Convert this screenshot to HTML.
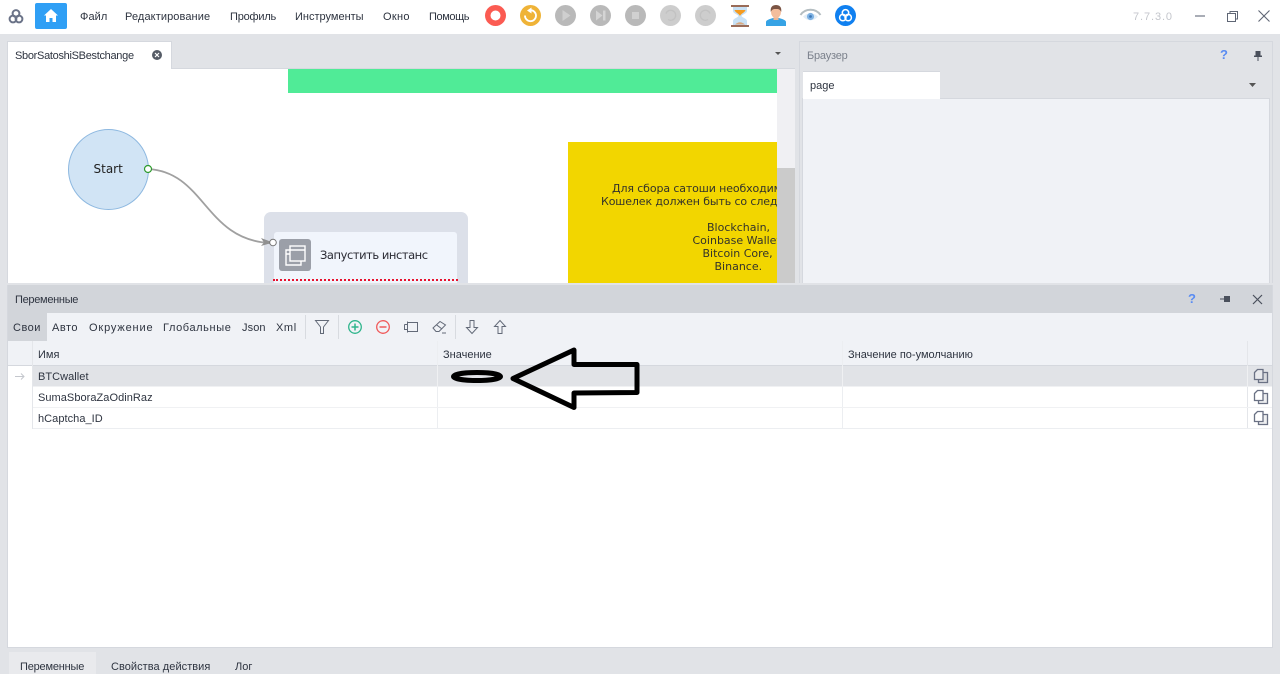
<!DOCTYPE html>
<html><head><meta charset="utf-8"><style>
html,body{margin:0;padding:0;width:1280px;height:674px;overflow:hidden;background:#e1e3e7}
body{position:relative;font-family:"Liberation Sans",sans-serif;font-size:11px;color:#2e3440}
.a{position:absolute}
.t{position:absolute;white-space:nowrap;line-height:14px}
svg{position:absolute;overflow:visible}
</style></head><body>
<div class="a" style="left:0;top:0;width:1280px;height:34px;background:#fff"></div>
<svg style="left:8px;top:8px" width="16" height="16" viewBox="0 0 16 16" fill="none" stroke="#6a7287" stroke-width="2"><circle cx="8" cy="5.500" r="3.400"/><circle cx="5" cy="11" r="3.400"/><circle cx="11" cy="11" r="3.400"/></svg>
<div class="a" style="left:35px;top:3px;width:32px;height:26px;background:#2f9ff5;border-radius:2px"></div>
<svg style="left:44px;top:9px" width="14" height="13" viewBox="0 0 14 13"><path d="M7 0L14 6.500H12V13H8.500V9H5.500V13H2V6.500H0Z" fill="#fff"/></svg>
<div class="t" style="left:80px;top:10px;letter-spacing:.1px">Файл</div>
<div class="t" style="left:125px;top:10px;letter-spacing:.1px">Редактирование</div>
<div class="t" style="left:230px;top:10px;letter-spacing:-.2px">Профиль</div>
<div class="t" style="left:295px;top:10px">Инструменты</div>
<div class="t" style="left:383px;top:10px;letter-spacing:.3px">Окно</div>
<div class="t" style="left:429px;top:10px;letter-spacing:-.4px">Помощь</div>

<svg style="left:485px;top:5px" width="21" height="21" viewBox="0 0 21 21"><circle cx="10.500" cy="10.500" r="10.500" fill="#fb5b52"/><circle cx="10.500" cy="10.500" r="5" fill="#fff"/></svg>
<svg style="left:520px;top:5px" width="21" height="21" viewBox="0 0 21 21"><circle cx="10.500" cy="10.500" r="10.500" fill="#efb337"/><path d="M11 5.200A5.500 5.500 0 1 1 5 10.500" fill="none" stroke="#fff" stroke-width="1.800"/><path d="M7 5.500L11.500 2.500V8.500Z" fill="#fff"/></svg>
<svg style="left:555px;top:5px" width="21" height="21" viewBox="0 0 21 21"><circle cx="10.500" cy="10.500" r="10.500" fill="#b9b9b9"/><path d="M7.500 5L15.500 10.500L7.500 16Z" fill="#cfcfcf"/></svg>
<svg style="left:590px;top:5px" width="21" height="21" viewBox="0 0 21 21"><circle cx="10.500" cy="10.500" r="10.500" fill="#b9b9b9"/><path d="M6 5.500L12.500 10.500L6 15.500Z" fill="#d4d4d4"/><rect x="13" y="5.500" width="2.500" height="10" fill="#d4d4d4"/></svg>
<svg style="left:625px;top:5px" width="21" height="21" viewBox="0 0 21 21"><circle cx="10.500" cy="10.500" r="10.500" fill="#b9b9b9"/><rect x="7" y="7" width="7" height="7" fill="#d0d0d0"/></svg>
<svg style="left:660px;top:5px" width="21" height="21" viewBox="0 0 21 21"><circle cx="10.500" cy="10.500" r="10.500" fill="#cdcdcd"/><path d="M6 8.500A5 5 0 1 1 8 14.500" fill="none" stroke="#c2c2c2" stroke-width="1.300"/></svg>
<svg style="left:695px;top:5px" width="21" height="21" viewBox="0 0 21 21"><circle cx="10.500" cy="10.500" r="10.500" fill="#cdcdcd"/><path d="M15 8.500A5 5 0 1 0 13 14.500" fill="none" stroke="#c2c2c2" stroke-width="1.300"/></svg>
<svg style="left:731px;top:5px" width="18" height="22" viewBox="0 0 18 22"><path d="M2 2H16V6C16 8.500 11 9.500 10.500 11C11 12.500 16 13.500 16 16V20H2V16C2 13.500 7 12.500 7.500 11C7 9.500 2 8.500 2 6Z" fill="#c8e1f5"/><path d="M3.500 5H14.500C14 7.500 10 8.500 9 11C8 8.500 4 7.500 3.500 5Z" fill="#f59b1f"/><rect x="0" y="0" width="18" height="2" fill="#9a6c58"/><rect x="0" y="20" width="18" height="2" fill="#9a6c58"/><path d="M4 19.500Q9 15 14 19.500Z" fill="#d8a880"/></svg>
<svg style="left:766px;top:5px" width="20" height="21" viewBox="0 0 20 21"><path d="M0 21V17C0 15 4 14 7 13H13C16 14 20 15 20 17V21Z" fill="#36a3e5"/><rect x="7.500" y="11" width="5" height="4" fill="#eab595"/><ellipse cx="10" cy="7" rx="5" ry="6.200" fill="#f4bd9c"/><path d="M4.800 7C4 1.500 7 0 10 0C13 0 16 1.500 15.200 7C14 4 12 4 10 4C8 4 6 4 4.800 7Z" fill="#7b5444"/></svg>
<svg style="left:800px;top:7px" width="21" height="17" viewBox="0 0 21 17"><path d="M0.500 8C5 1 16 1 20.500 8" fill="none" stroke="#b4bdc1" stroke-width="2"/><path d="M3 9.500C7 14.500 14 14.500 18 9.500C14 5.500 7 5.500 3 9.500Z" fill="#e2edf6"/><circle cx="10.500" cy="9.500" r="3.600" fill="#7fb2e3"/><circle cx="10.500" cy="9.500" r="1.400" fill="#3c78b8"/></svg>
<svg style="left:835px;top:5px" width="21" height="21" viewBox="0 0 21 21"><circle cx="10.500" cy="10.500" r="10.500" fill="#1080f0"/><g fill="none" stroke="#fff" stroke-width="1.500"><circle cx="10.500" cy="7.800" r="3.200"/><circle cx="7.800" cy="12.600" r="3.200"/><circle cx="13.200" cy="12.600" r="3.200"/></g></svg>

<div class="t" style="left:1133px;top:10px;color:#c4c6cc;letter-spacing:.9px">7.7.3.0</div>
<div class="a" style="left:1195px;top:15px;width:10px;height:2px;background:#a9adb6"></div>
<svg style="left:1227px;top:11px" width="11" height="11" viewBox="0 0 11 11" fill="none" stroke="#5f6675"><path d="M3 2.500V.500H10.500V8H8.500"/><rect x=".500" y="2.500" width="8" height="8" /></svg>
<svg style="left:1258px;top:10px" width="12" height="12" viewBox="0 0 12 12" stroke="#5f6675" stroke-width="1.100"><path d="M.500.500L11.500 11.500M11.500.500L.500 11.500"/></svg>

<!-- editor -->
<div class="a" style="left:7px;top:41px;width:165px;height:28px;background:#fff;border:1px solid #d5d8de;border-bottom:0;box-sizing:border-box"></div>
<div class="t" style="left:15px;top:49px;letter-spacing:-.3px">SborSatoshiSBestchange</div>
<svg style="left:152px;top:50px" width="10" height="10" viewBox="0 0 10 10"><circle cx="5" cy="5" r="5" fill="#555b66"/><path d="M3 3L7 7M7 3L3 7" stroke="#fff" stroke-width="1.200"/></svg>
<div class="a" style="left:172px;top:68px;width:623px;height:1px;background:#d5d8de"></div>
<div class="a" style="left:8px;top:69px;width:769px;height:215px;background:#fff;overflow:hidden">
  <div class="a" style="left:280px;top:0;width:489px;height:24px;background:#50eb97"></div>
  <div class="a" style="left:560px;top:73px;width:209px;height:142px;background:#f2d600;overflow:hidden;font-family:'DejaVu Sans',sans-serif;color:#33332a;font-size:11px;line-height:13px">
    <div class="t" style="left:44px;top:40px;line-height:13px;letter-spacing:-.12px">Для сбора сатоши необходимо</div>
    <div class="t" style="left:33px;top:53px;line-height:13px;letter-spacing:-.12px">Кошелек должен быть со следующих</div>
    <div class="t" style="left:139px;top:79px;line-height:13px">Blockchain,</div>
    <div class="t" style="left:124.500px;top:92px;line-height:13px">Coinbase Wallet,</div>
    <div class="t" style="left:134.500px;top:105px;line-height:13px">Bitcoin Core,</div>
    <div class="t" style="left:146.500px;top:118px;line-height:13px">Binance.</div>
  </div>
  <div class="a" style="left:60px;top:60px;width:79px;height:79px;border-radius:50%;background:#d1e4f5;border:1px solid #8db8e0"></div>
  <div class="t" style="left:85.500px;top:92px;font:12px/16px 'DejaVu Sans',sans-serif;color:#222">Start</div>
  <div class="a" style="left:256px;top:143px;width:204px;height:72px;background:#dce0e9;border-radius:7px 7px 0 0"></div>
  <div class="a" style="left:266px;top:163px;width:183px;height:52px;background:#f1f5fc;border-radius:3px 3px 0 0"></div>
  <div class="a" style="left:271px;top:170px;width:32px;height:32px;background:#9b9fa8;border-radius:3px"></div>
  <svg style="left:271px;top:170px" width="32" height="32" viewBox="0 0 32 32" fill="none" stroke="#fff" stroke-width="1.400"><rect x="11" y="7" width="15" height="15"/><path d="M11 11H7V26H22V22M7 15H11M26 11H11"/></svg>
  <div class="t" style="left:312px;top:178px;font:11.500px/16px 'DejaVu Sans',sans-serif;color:#2a2a33;letter-spacing:-.45px">Запустить инстанс</div>
  <div class="a" style="left:265px;top:210px;width:185px;height:0;border-top:2px dotted #e8112d"></div>
  <svg style="left:0;top:0" width="769" height="215"><path d="M140 100C197 103 197 171 262 174" fill="none" stroke="#a0a0a0" stroke-width="1.800"/><path d="M265 173.500L253 169L256 173.500L253 177Z" fill="#909090"/><circle cx="140" cy="100" r="3.500" fill="#fff" stroke="#2e9a2e" stroke-width="1.200"/><circle cx="265" cy="173.500" r="3.300" fill="#fff" stroke="#777" stroke-width="1"/></svg>
</div>
<div class="a" style="left:777px;top:69px;width:18px;height:99px;background:#f0f0f3"></div>
<div class="a" style="left:777px;top:168px;width:18px;height:116px;background:#cbcbcb"></div>
<div class="a" style="left:7px;top:41px;width:1px;height:243px;background:#d5d8de"></div>
<svg style="left:775px;top:52px" width="6" height="3"><path d="M0 0H6L3 3Z" fill="#555"/></svg>

<!-- browser -->
<div class="a" style="left:799px;top:41px;width:474px;height:243px;border:1px solid #d5d8de;border-bottom:0;box-sizing:border-box"></div>
<div class="t" style="left:807px;top:49px;color:#7b818c;letter-spacing:-.2px">Браузер</div>
<div class="t" style="left:1220px;top:48px;color:#5a8cf2;font-weight:bold;font-size:13px">?</div>
<svg style="left:1254px;top:51px" width="8" height="10" viewBox="0 0 8 10" fill="#4a505c"><rect x="1.500" y="0" width="5" height="5"/><rect x="0" y="4.500" width="8" height="1.500"/><rect x="3.500" y="6" width="1" height="4"/></svg>
<div class="a" style="left:803px;top:71px;width:137px;height:28px;background:#fff;border-top:1px solid #d5d8de;box-sizing:border-box"></div>
<div class="t" style="left:810px;top:79px">page</div>
<svg style="left:1249px;top:83px" width="7" height="4"><path d="M0 0H7L3.500 4Z" fill="#555"/></svg>
<div class="a" style="left:802px;top:98px;width:468px;height:186px;background:#f0f2f6;border:1px solid #d5d8de;border-bottom:0;box-sizing:border-box"></div>
<div class="a" style="left:803px;top:98px;width:137px;height:1px;background:#fff"></div>

<!-- variables -->
<div class="a" style="left:7px;top:283px;width:1266px;height:365px;background:#fff;border:1px solid #d5d8de;border-top:0;box-sizing:border-box"></div>
<div class="a" style="left:0;top:283px;width:1280px;height:2px;background:#e1e3e7"></div>
<div class="a" style="left:8px;top:285px;width:1264px;height:28px;background:#d2d5da"></div>
<div class="t" style="left:15px;top:293px;letter-spacing:-.3px">Переменные</div>
<div class="t" style="left:1188px;top:292px;color:#5a8cf2;font-weight:bold;font-size:13px">?</div>
<svg style="left:1220px;top:295px" width="10" height="8" viewBox="0 0 10 8" fill="#4a505c"><rect x="4" y="1" width="6" height="6"/><rect x="0" y="3.500" width="5" height="1"/></svg>
<svg style="left:1253px;top:295px" width="9" height="9" viewBox="0 0 9 9" stroke="#4a505c" stroke-width="1.200"><path d="M0 0L9 9M9 0L0 9"/></svg>
<div class="a" style="left:8px;top:313px;width:1264px;height:28px;background:#f0f2f6"></div>
<div class="a" style="left:8px;top:313px;width:39px;height:28px;background:#d2d5da"></div>
<div class="t" style="left:13px;top:321px;letter-spacing:.5px">Свои</div>
<div class="t" style="left:52px;top:321px;letter-spacing:.5px">Авто</div>
<div class="t" style="left:89px;top:321px;letter-spacing:.85px">Окружение</div>
<div class="t" style="left:163px;top:321px;letter-spacing:.6px">Глобальные</div>
<div class="t" style="left:242px;top:321px;letter-spacing:.1px">Json</div>
<div class="t" style="left:276px;top:321px;letter-spacing:.6px">Xml</div>
<div class="a" style="left:305px;top:315px;width:1px;height:24px;background:#d8dbe0"></div>
<div class="a" style="left:338px;top:315px;width:1px;height:24px;background:#d8dbe0"></div>
<div class="a" style="left:455px;top:315px;width:1px;height:24px;background:#d8dbe0"></div>
<svg style="left:315px;top:320px" width="14" height="14" viewBox="0 0 14 14" fill="none" stroke="#636a78"><path d="M.500.500H13.500L8.500 7V13.500H5.500V7Z"/></svg>
<svg style="left:348px;top:320px" width="14" height="14" viewBox="0 0 14 14" fill="none" stroke="#2fb58c" stroke-width="1.300"><circle cx="7" cy="7" r="6.300"/><path d="M3.500 7H10.500M7 3.500V10.500" stroke-width="1.500"/></svg>
<svg style="left:376px;top:320px" width="14" height="14" viewBox="0 0 14 14" fill="none" stroke="#f05a5a" stroke-width="1.300"><circle cx="7" cy="7" r="6.300"/><path d="M3.500 7H10.500" stroke-width="1.500"/></svg>
<svg style="left:404px;top:321px" width="14" height="12" viewBox="0 0 14 12" fill="none" stroke="#636a78"><path d="M3.500 1.500H13.500V10.500H3.500ZM.500 3.500H3.500M.500 3.500V8.500H3.500M3.500.500V11.500"/></svg>
<svg style="left:432px;top:320px" width="15" height="14" viewBox="0 0 15 14" fill="none" stroke="#636a78"><path d="M1 8L8 1.500L13.500 5L7 11.500H4Z"/><path d="M4.500 4.800L10 9"/><path d="M10 13H14"/></svg>
<svg style="left:466px;top:320px" width="12" height="14" viewBox="0 0 12 14" fill="none" stroke="#636a78"><path d="M4 .500H8V7.500H11.500L6 13.500L.500 7.500H4Z"/></svg>
<svg style="left:494px;top:320px" width="12" height="14" viewBox="0 0 12 14" fill="none" stroke="#636a78"><path d="M4 13.500H8V6.500H11.500L6 .500L.500 6.500H4Z"/></svg>

<div class="a" style="left:8px;top:341px;width:1264px;height:25px;background:#f0f2f6;border-bottom:1px solid #d5d8de;box-sizing:border-box"></div>
<div class="a" style="left:32px;top:341px;width:1px;height:88px;background:#e4e6ea"></div>
<div class="a" style="left:437px;top:341px;width:1px;height:88px;background:#eceef1"></div>
<div class="a" style="left:842px;top:341px;width:1px;height:88px;background:#eceef1"></div>
<div class="a" style="left:1247px;top:341px;width:1px;height:88px;background:#e4e6ea"></div>
<div class="a" style="left:33px;top:366px;width:1239px;height:20px;background:#e1e3e7"></div>
<div class="a" style="left:33px;top:386px;width:1239px;height:1px;background:#f0f1f3"></div>
<div class="a" style="left:33px;top:407px;width:1239px;height:1px;background:#f0f1f3"></div>
<div class="a" style="left:33px;top:428px;width:1239px;height:1px;background:#eceef1"></div>
<div class="a" style="left:437px;top:366px;width:1px;height:20px;background:#eff0f2"></div>
<div class="a" style="left:842px;top:366px;width:1px;height:20px;background:#eff0f2"></div>
<div class="a" style="left:1247px;top:366px;width:1px;height:20px;background:#eff0f2"></div>
<div class="t" style="left:38px;top:348px">Имя</div>
<div class="t" style="left:443px;top:348px">Значение</div>
<div class="t" style="left:848px;top:348px">Значение по-умолчанию</div>
<svg style="left:15px;top:373px" width="10" height="7" viewBox="0 0 10 7" fill="none" stroke="#c4c7cd"><path d="M0 3.500H9M6 .500L9 3.500L6 6.500"/></svg>
<div class="t" style="left:38px;top:370px;letter-spacing:.05px">BTCwallet</div>
<div class="t" style="left:38px;top:391px;letter-spacing:.05px">SumaSboraZaOdinRaz</div>
<div class="t" style="left:38px;top:412px;letter-spacing:.05px">hCaptcha_ID</div>
<svg style="left:1254px;top:369px" width="14" height="14" viewBox="0 0 14 14" fill="none" stroke="#6a7184" stroke-width="1.300"><path d="M9 3.500H13.500V13.500H4.500V10.500" fill="#d8dade"/><path d="M.500 3.500L3.500.500H9V10.500H.500Z" fill="#e8e9ec"/></svg>
<svg style="left:1254px;top:390px" width="14" height="14" viewBox="0 0 14 14" fill="none" stroke="#6a7184" stroke-width="1.300"><path d="M9 3.500H13.500V13.500H4.500V10.500" fill="#eeeff1"/><path d="M.500 3.500L3.500.500H9V10.500H.500Z" fill="#fff"/></svg>
<svg style="left:1254px;top:411px" width="14" height="14" viewBox="0 0 14 14" fill="none" stroke="#6a7184" stroke-width="1.300"><path d="M9 3.500H13.500V13.500H4.500V10.500" fill="#eeeff1"/><path d="M.500 3.500L3.500.500H9V10.500H.500Z" fill="#fff"/></svg>

<svg style="left:0;top:0" width="1280" height="674" fill="none" stroke="#000" stroke-width="5" stroke-linejoin="round"><ellipse cx="477" cy="376.500" rx="23.500" ry="4"/><path d="M513 378.500L574 350V364.500H637V392.500L574 393V407.500Z"/></svg>

<!-- bottom tabs -->
<div class="a" style="left:9px;top:652px;width:87px;height:22px;background:#e9eaed"></div>
<div class="t" style="left:20px;top:660px;letter-spacing:-.2px">Переменные</div>
<div class="t" style="left:111px;top:660px;letter-spacing:.05px">Свойства действия</div>
<div class="t" style="left:235px;top:660px">Лог</div>
</body></html>
